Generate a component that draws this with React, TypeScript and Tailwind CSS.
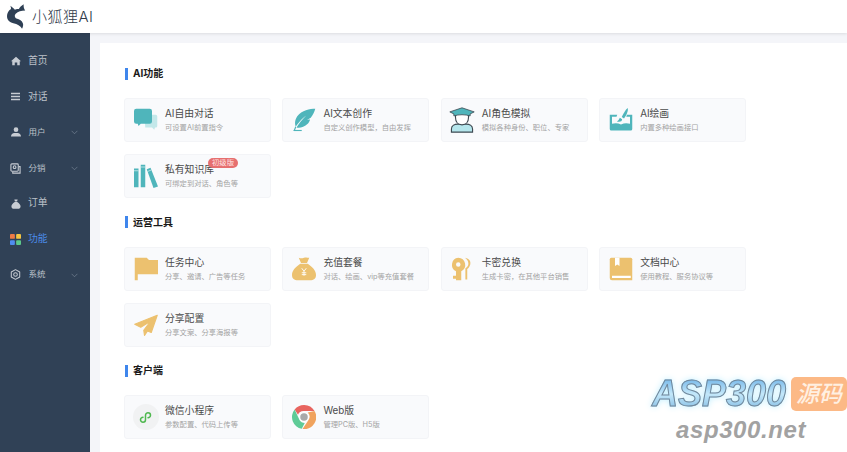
import React from "react";

const FONT = "font-['Inter','Noto_Sans_CJK_SC',sans-serif]";
const T = "#4fb5bb";
const Y = "#ecc16f";

const Chat = () => (
  <svg viewBox="0 0 32 32" className="w-[24px] h-[24px]">
    <path d="M14 9h15a2 2 0 0 1 2 2v13a2 2 0 0 1-2 2h-1l-1 3-3-3H15z" fill="#c3e8ea" />
    <path d="M3 1h18a3 3 0 0 1 3 3v14a3 3 0 0 1-3 3H9l-3 3-1-3H3a3 3 0 0 1-3-3V4a3 3 0 0 1 3-3z" fill={T} />
  </svg>
);
const Feather = () => (
  <svg viewBox="0 0 32 32" className="w-[24px] h-[24px]">
    <path d="M31 1C24 1 13 3 7 11c-4 6-3 11-2 14 2-3 7-10 14-15-6 6-10 11-13 16 4 1 10 0 15-5 3-3 3-6 3-6l-4 1 5-3c3-4 5-8 6-12z" fill={T} />
    <path d="M2 30h11" stroke={T} strokeWidth="1.500" />
    <path d="M3 30l2-5" stroke={T} strokeWidth="1.500" />
  </svg>
);
const Student = () => (
  <svg viewBox="0 0 32 32" className="w-[26px] h-[26px]">
    <path d="M3 31v-4c0-4 4-6 8-6h10c4 0 8 2 8 6v4z" fill="#b5e6ec" stroke="#3f4a52" strokeWidth="1.400" />
    <path d="M8 8v5c0 5 3 9 8 9s8-4 8-9V8" fill="#fff" stroke="#3f4a52" strokeWidth="1.400" />
    <path d="M16 1 1 6l5 2.500V11c6-2 14-2 20 0V8.500L31 6z" fill={T} stroke="#3f4a52" strokeWidth="1" />
  </svg>
);
const Paint = () => (
  <svg viewBox="0 0 32 32" className="w-[24px] h-[24px]">
    <path d="M1 9h10l-1 2.500H4V21c4-1 8-1 12 1 4-2 8-2 12-1v-9.500h-5l1-2.500h7v19a2 2 0 0 1-2 2H3a2 2 0 0 1-2-2z" fill={T} />
    <path d="M25 0c1 4-2 10-5 14l-3-2c2-4 5-10 8-12z" fill={T} />
    <path d="M14.500 13l3 2c0 3-3 4-7 3 2-1 3-3 4-5z" fill={T} />
  </svg>
);
const Books = () => (
  <svg viewBox="0 0 32 32" className="w-[24px] h-[24px]">
    <path d="M0 6h6v25H0z" fill={T} />
    <path d="M9 1h6v30H9z" fill={T} />
    <path d="M17 7l5-2 10 25-6 2z" fill={T} />
    <path d="M0 9h6M9 4h6M18 10l5-2" stroke="#d6f0f2" strokeWidth="1" />
  </svg>
);
const Flag = () => (
  <svg viewBox="0 0 32 32" className="w-[24px] h-[24px]">
    <path d="M1 1h16l3 3h12v19H5v8H1z" fill={Y} />
  </svg>
);
const Bag = () => (
  <svg viewBox="0 0 32 32" className="w-[24px] h-[24px]">
    <path d="M9 1c3 1 4 1 7 0s5 0 7 0l-3 7h-8zM11 9h10c6 4 11 9 11 15 0 5-3 7-8 7H8c-5 0-8-2-8-7C0 18 5 13 11 9z" fill={Y} />
    <path d="M13 15l3 4 3-4M16 19v6M13 21h6M13 23.500h6" stroke="#fff" strokeWidth="1.200" fill="none" />
  </svg>
);
const Key = () => (
  <svg viewBox="0 0 32 32" className="w-[24px] h-[24px]">
    <path d="M20 1c6 1 8 5 7 9-1 3-2 5-4 6v14h-2.500V15c2-1 4-3 4-6 0-4-2-6-4.500-8z" fill={Y} />
    <path fillRule="evenodd" d="M11 1a9.500 9.500 0 0 1 4 18v12H8v-2H4v-4h4v-6A9.500 9.500 0 0 1 11 1zm0 6a3 3 0 1 0 0 6 3 3 0 0 0 0-6z" fill={Y} />
  </svg>
);
const Book = () => (
  <svg viewBox="0 0 32 32" className="w-[24px] h-[24px]">
    <path d="M3 1h26a2 2 0 0 1 2 2v28H4a3 3 0 0 1-3-3V3a2 2 0 0 1 2-2z" fill={Y} />
    <path d="M8 1h6v11l-3-2-3 2z" fill="#fff" />
    <path d="M4 25h25v3H4z" fill="#fff" />
  </svg>
);
const Plane = () => (
  <svg viewBox="0 0 32 32" className="w-[24px] h-[24px]">
    <path d="M31 3 1 15l8 4 13-8-9 12 1 7 4-6 5 2z" fill={Y} stroke={Y} strokeWidth="1.500" strokeLinejoin="round" />
  </svg>
);
const Mini = () => (
  <span className="w-[26px] h-[26px] rounded-full bg-[#f1f2f3] flex items-center justify-center">
    <svg viewBox="0 0 24 24" className="w-[15px] h-[15px]" fill="none" stroke="#4fb84f" strokeWidth="2.400" strokeLinecap="round">
      <path d="M12 8.500v7a4 4 0 1 1-4-4M12 8.500a4 4 0 1 1 4 4" />
    </svg>
  </span>
);
const Chrome = () => (
  <svg viewBox="0 0 32 32" className="w-[24px] h-[24px]">
    <path d="M16 0a16 16 0 0 1 14 8H16a8 8 0 0 0-8 5L3.500 6A16 16 0 0 1 16 0z" fill="#e8645f" />
    <path d="M3.500 6 10 20a8 8 0 0 0 7 4l-4 7.700A16 16 0 0 1 3.500 6z" fill="#5fcb97" />
    <path d="M30 8a16 16 0 0 1-16 24l8-12a8 8 0 0 0-1-10z" fill="#f0a35e" />
    <circle cx="16" cy="16" r="6.500" fill="#fff" />
    <circle cx="16" cy="16" r="5" fill="#a9a9a9" />
  </svg>
);

type Item = { icon: React.ReactNode; title: string; sub: string; tag?: string };

const sections: { title: string; items: Item[] }[] = [
  {
    title: "AI功能",
    items: [
      { icon: <Chat />, title: "AI自由对话", sub: "可设置AI前置指令" },
      { icon: <Feather />, title: "AI文本创作", sub: "自定义创作模型，自由发挥" },
      { icon: <Student />, title: "AI角色模拟", sub: "模拟各种身份、职位、专家" },
      { icon: <Paint />, title: "AI绘画", sub: "内置多种绘画接口" },
      { icon: <Books />, title: "私有知识库", sub: "可绑定到对话、角色等", tag: "初级版" },
    ],
  },
  {
    title: "运营工具",
    items: [
      { icon: <Flag />, title: "任务中心", sub: "分享、邀请、广告等任务" },
      { icon: <Bag />, title: "充值套餐", sub: "对话、绘画、vip等充值套餐" },
      { icon: <Key />, title: "卡密兑换", sub: "生成卡密，在其他平台销售" },
      { icon: <Book />, title: "文档中心", sub: "使用教程、服务协议等" },
      { icon: <Plane />, title: "分享配置", sub: "分享文案、分享海报等" },
    ],
  },
  {
    title: "客户端",
    items: [
      { icon: <Mini />, title: "微信小程序", sub: "参数配置、代码上传等" },
      { icon: <Chrome />, title: "Web版", sub: "管理PC版、H5版" },
    ],
  },
];

const Card = ({ item }: { item: Item }) => (
  <div className="relative h-[44px] rounded-[3px] bg-[#f9fafc] border border-[#f3f4f7] flex items-center">
    <div className="w-[40px] shrink-0 flex justify-center pl-[1px]">{item.icon}</div>
    <div className="min-w-0">
      <div className="relative text-[9.800px] leading-[13px] text-[#4a4a4a] whitespace-nowrap">
        {item.title}
        {item.tag && (
          <span className="absolute left-[43px] top-[-5px] h-[10px] w-[30px] rounded-full bg-[#e66f6f] text-[#ffe6e6] text-[7.300px] leading-[10px] text-center">
            {item.tag}
          </span>
        )}
      </div>
      <div className="text-[7.300px] leading-[10px] mt-[3px] text-[#a3a3a3] whitespace-nowrap">{item.sub}</div>
    </div>
  </div>
);

const Chevron = () => (
  <svg viewBox="0 0 12 12" className="absolute left-[71px] top-1/2 -translate-y-1/2 w-[7px] h-[7px]" fill="none" stroke="#8592a3" strokeWidth="1">
    <path d="M1 4l5 5 5-5" />
  </svg>
);

const c = "#c7ccd3";
const nav: { icon: React.ReactNode; label: string; small?: boolean; arrow?: boolean; active?: boolean }[] = [
  {
    label: "首页",
    icon: (
      <svg viewBox="0 0 12 12" className="w-[10px] h-[10px]" fill={c}>
        <path d="M6 .8 12 6.200h-1.500V11.200H7.500V7.800h-3v3.400H1.500V6.200H0z" />
      </svg>
    ),
  },
  {
    label: "对话",
    icon: (
      <svg viewBox="0 0 12 12" className="w-[9px] h-[9px]" fill={c}>
        <path d="M0 1h12v2H0zM0 5h12v2H0zM0 9h12v2H0z" />
      </svg>
    ),
  },
  {
    label: "用户",
    small: true,
    arrow: true,
    icon: (
      <svg viewBox="0 0 12 12" className="w-[10px] h-[10px]" fill={c}>
        <circle cx="6" cy="3.200" r="2.800" />
        <path d="M0 11.500c0-3 2-4 4-4.200h4c2 .2 4 1.200 4 4.200z" />
      </svg>
    ),
  },
  {
    label: "分销",
    small: true,
    arrow: true,
    icon: (
      <svg viewBox="0 0 12 12" className="w-[11px] h-[11px]" fill="none" stroke={c} strokeWidth="1.200">
        <rect x="1" y="1" width="8" height="8" rx="1" />
        <path d="M3 9.500V11h8V4H9.500" />
        <circle cx="5" cy="4.500" r="1.500" />
      </svg>
    ),
  },
  {
    label: "订单",
    icon: (
      <svg viewBox="0 0 12 12" className="w-[10px] h-[10px]" fill={c}>
        <path d="M4 .5h4L7.300 3H4.700zM4.500 3.500h3C10 5 11.500 7 11.500 9c0 2-1.500 2.800-3 2.800h-5c-1.500 0-3-.8-3-2.800 0-2 1.500-4 4-5.500z" />
      </svg>
    ),
  },
  {
    label: "功能",
    active: true,
    icon: (
      <svg viewBox="0 0 12 12" className="w-[11px] h-[11px]">
        <rect x="0" y="0" width="5.300" height="5.300" rx="1" fill="#ef7b45" />
        <rect x="6.700" y="0" width="5.300" height="5.300" rx="1" fill="#f4c542" />
        <rect x="0" y="6.700" width="5.300" height="5.300" rx="1" fill="#4f8df0" />
        <rect x="6.700" y="6.700" width="5.300" height="5.300" rx="1" fill="#5cc98a" />
      </svg>
    ),
  },
  {
    label: "系统",
    small: true,
    arrow: true,
    icon: (
      <svg viewBox="0 0 12 12" className="w-[11px] h-[11px]" fill="none" stroke={c} strokeWidth="1.100">
        <path d="M6 .7 10.600 3.300v5.400L6 11.300 1.400 8.700V3.300z" strokeLinejoin="round" />
        <circle cx="6" cy="6" r="2" />
      </svg>
    ),
  },
];

export default function App() {
  return (
    <div className={`${FONT} relative w-[847px] h-[452px] overflow-hidden bg-[#f4f5f9] flex flex-col`}>
      <header className="relative z-10 h-[33px] shrink-0 bg-white flex items-center pl-[7px] shadow-[0_1px_3px_rgba(0,0,0,0.10)]">
        <svg viewBox="0 0 24 32" className="w-[19px] h-[26px] mt-[-2px]" fill="#2f4055">
          <path d="M4 3c2 1 4 3 6 5 2-1 4-1 5-1 1-2 3-4 6-6 0 3 0 5 2 8-5 0-9 1-12 4-2 2-1 5 1 6 4 1 7 3 8 6 1 2 0 5-1 7-2-4-6-6-11-7-5-1-8-4-8-9 0-4 2-7 5-9 0-1 0-3-1-4z" />
        </svg>
        <span className="ml-[6px] text-[15px] leading-[20px] font-light tracking-[0.500px] text-[#2f3a48] whitespace-nowrap">小狐狸AI</span>
      </header>
      <div className="flex-1 flex min-h-0">
        <aside className="w-[90px] shrink-0 bg-[#304156] pt-[10.500px]">
          {nav.map((n) => (
            <div key={n.label} className="relative h-[35.600px] flex items-center pl-[10px]">
              <span className="w-[11px] flex justify-center">{n.icon}</span>
              <span
                className={`${n.small ? "ml-[7.500px] text-[8.500px]" : "ml-[7px] text-[9.800px]"} ${
                  n.active ? "text-[#4b8be8]" : "text-[#bcc1c9]"
                }`}
              >
                {n.label}
              </span>
              {n.arrow && <Chevron />}
            </div>
          ))}
        </aside>
        <main className="flex-1 min-w-0 pt-[10px] pl-[10px]">
          <div className="h-full bg-white pl-[24px] pr-[101px] pt-[24.500px]">
            {sections.map((s) => (
              <section key={s.title} className="mb-[18px]">
                <h2 className="h-[12px] flex items-center border-l-[3px] border-[#3f86ec] pl-[5px] text-[10px] font-bold text-[#1a1a1a] mb-[18.500px] ml-[1px]">
                  {s.title}
                </h2>
                <div className="grid grid-cols-4 gap-x-[11.500px] gap-y-[12px]">
                  {s.items.map((it) => (
                    <Card key={it.title} item={it} />
                  ))}
                </div>
              </section>
            ))}
          </div>
        </main>
      </div>
      <div className="absolute left-[652px] top-[375px] w-[195px] select-none">
        <div className="flex items-center">
          <span className="font-['Liberation_Sans',sans-serif] italic font-bold text-[36px] leading-[38px] bg-gradient-to-b from-[#62ace4] via-[#c4e8fa] to-[#76b4df] bg-clip-text text-transparent [-webkit-text-stroke:1px_#71889b] drop-shadow-[0_0_3px_#c4f0ff]">
            ASP300
          </span>
          <span className="ml-[5px] w-[58px] h-[34px] rounded-[5px] bg-[#fcb986] text-[#fff0e2] text-[23px] leading-[34px] text-center italic font-medium">
            源码
          </span>
        </div>
        <div className="font-['Liberation_Sans',sans-serif] italic font-bold text-[24px] leading-[28px] tracking-[0.600px] text-[#a2a2a2] ml-[24px] mt-[3px]">
          asp300.net
        </div>
      </div>
    </div>
  );
}
